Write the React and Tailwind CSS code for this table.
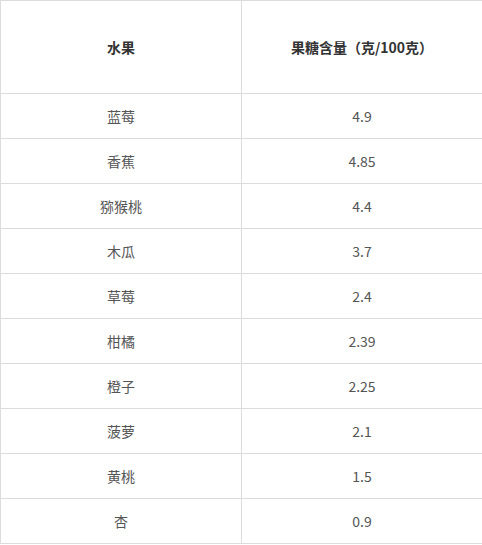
import React from 'react';

const rows = [
  { fruit: '蓝莓', sugar: '4.9' },
  { fruit: '香蕉', sugar: '4.85' },
  { fruit: '猕猴桃', sugar: '4.4' },
  { fruit: '木瓜', sugar: '3.7' },
  { fruit: '草莓', sugar: '2.4' },
  { fruit: '柑橘', sugar: '2.39' },
  { fruit: '橙子', sugar: '2.25' },
  { fruit: '菠萝', sugar: '2.1' },
  { fruit: '黄桃', sugar: '1.5' },
  { fruit: '杏', sugar: '0.9' },
];

const App = () => {
  return (
    <div className="w-[482px] h-[545px] overflow-hidden bg-white font-['Microsoft_YaHei','Noto_Sans_CJK_SC',sans-serif]">
      <table className="w-[483px] border-collapse table-fixed text-[14px]">
        <thead>
          <tr className="h-[93px]">
            <th className="w-[241px] border border-[#dcdcdc] font-bold text-[#333]">水果</th>
            <th className="border border-[#dcdcdc] font-bold text-[#333]">果糖含量（克/100克）</th>
          </tr>
        </thead>
        <tbody>
          {rows.map((row) => (
            <tr key={row.fruit} className="h-[45px]">
              <td className="border border-[#dcdcdc] text-center text-[#555]">{row.fruit}</td>
              <td className="border border-[#dcdcdc] text-center text-[#555]">{row.sugar}</td>
            </tr>
          ))}
        </tbody>
      </table>
    </div>
  );
};

export default App;
